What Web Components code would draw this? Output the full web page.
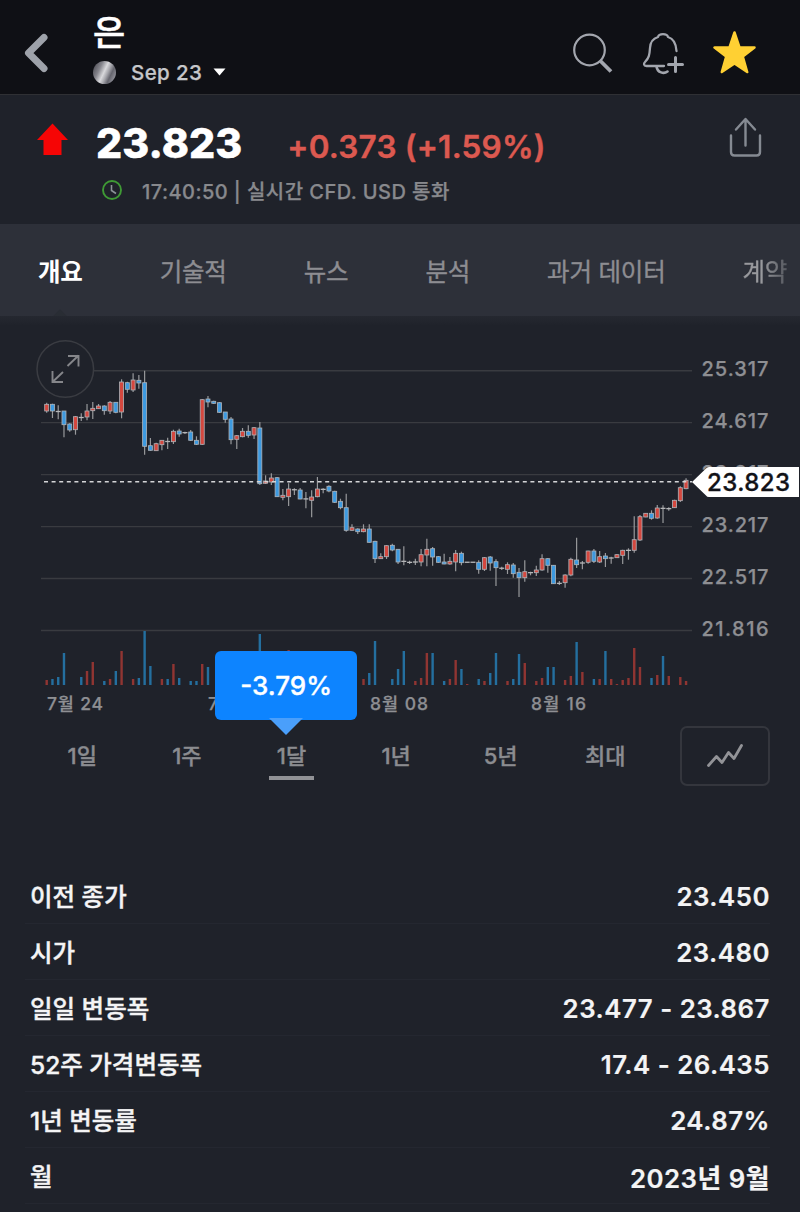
<!DOCTYPE html>
<html lang="ko">
<head>
<meta charset="utf-8">
<title>은 23.823</title>
<style>
    body {
        margin: 0;
        width: 800px;
        height: 1212px;
        overflow: hidden;
        background: #1f222a;
        color: #f4f4f5;
        font-family: Inter, "Noto Sans CJK KR", sans-serif;
    }
</style>
</head>
<body>
<top-bar>
    <span slot="title">은</span>
    <span slot="contract">Sep 23</span>
</top-bar>
<price-summary>
    <span slot="price">23.823</span>
    <span slot="change">+0.373 (+1.59%)</span>
    <span slot="status">17:40:50 | 실시간 CFD. USD 통화</span>
</price-summary>
<tab-strip>
    <tab-item active>개요</tab-item>
    <tab-item>기술적</tab-item>
    <tab-item>뉴스</tab-item>
    <tab-item>분석</tab-item>
    <tab-item>과거 데이터</tab-item>
    <tab-item>계약</tab-item>
</tab-strip>
<price-chart></price-chart>
<range-picker>
    <range-item>1일</range-item>
    <range-item>1주</range-item>
    <range-item active change="-3.79%">1달</range-item>
    <range-item>1년</range-item>
    <range-item>5년</range-item>
    <range-item>최대</range-item>
</range-picker>
<stat-list>
    <stat-row label="이전 종가">23.450</stat-row>
    <stat-row label="시가">23.480</stat-row>
    <stat-row label="일일 변동폭">23.477 - 23.867</stat-row>
    <stat-row label="52주 가격변동폭">17.4 - 26.435</stat-row>
    <stat-row label="1년 변동률">24.87%</stat-row>
    <stat-row label="월">2023년 9월</stat-row>
</stat-list>

<script>
class BaseElement extends HTMLElement {
    connectedCallback() {
        const template = document.createElement('template');
        template.innerHTML = this.render();
        this.attachShadow({ mode: 'open' }).append(template.content.cloneNode(true));
    }
}

class TopBar extends BaseElement {
    render() {
        return `
            <style>
                :host {
                    display: flex;
                    align-items: center;
                    box-sizing: border-box;
                    height: 95px;
                    padding: 0 42px 0 22px;
                    background: #0f1015;
                    border-bottom: 1px solid #2f3034;
                }
                .back { width: 28px; height: 40px; margin-top: 12px; }
                .name { flex: 1; margin-left: 43px; }
                .title {
                    height: 40px;
                    margin-top: 4px;
                    font-size: 35px;
                    line-height: 38px;
                    font-weight: 500;
                    color: #fff;
                    -webkit-text-stroke: 0.5px;
                }
                .contract {
                    display: flex;
                    align-items: center;
                    height: 24px;
                    margin-top: 6px;
                    font-size: 20.5px;
                    font-weight: 500;
                    letter-spacing: 0.4px;
                    color: #c6c7ca;
                    -webkit-text-stroke: 0.25px;
                }
                .coin {
                    width: 23px;
                    height: 23px;
                    border-radius: 50%;
                    margin-right: 15px;
                    background: linear-gradient(115deg, #55555d 10%, #85858c 30%, #d9d9dc 48%, #a5a5ab 60%, #65656e 72%, #a2a2aa 95%);
                }
                .caret { margin-left: 11px; }
                .actions { display: flex; gap: 28px; margin-top: 11px; }
            </style>
            <svg class="back" viewBox="0 0 28 40" fill="none" stroke="#9ea2aa" stroke-width="7" stroke-linecap="round" stroke-linejoin="round">
                <path d="M22 4.5 6.500 20 22 35.500"/>
            </svg>
            <div class="name">
                <div class="title"><slot name="title"></slot></div>
                <div class="contract">
                    <span class="coin"></span>
                    <slot name="contract"></slot>
                    <svg class="caret" width="13" height="8" viewBox="0 0 13 8"><path d="M.5.500h12L6.500 7.500z" fill="#fff"/></svg>
                </div>
            </div>
            <div class="actions">
                <svg width="42" height="44" viewBox="0 0 42 44" fill="none" stroke="#a3a6ae">
                    <circle cx="17.500" cy="19" r="15.300" stroke-width="2.200"/>
                    <path d="M28 29.500 39 40.500" stroke-width="3.800"/>
                </svg>
                <svg width="42" height="44" viewBox="0 0 42 44" fill="none" stroke="#a3a6ae" stroke-width="2.300" stroke-linecap="round" stroke-linejoin="round">
                    <path d="M22 35H4.500C1.500 35 1.500 32.500 3 31C7 27 7.500 24 8 17C8.300 11 11 7.500 16 6C17 2.200 25 2.200 26 6C31 7.500 34 11 34.500 20"/>
                    <path d="M14.500 35.500C15.500 42 22 43 25.500 40.500" stroke-width="2.600"/>
                    <path d="M33.500 26.500V40.500M26.500 33.500H40.500" stroke-width="3"/>
                </svg>
                <svg width="46" height="44" viewBox="0 0 46 44" fill="#ffd033" stroke="#ffd033" stroke-width="2.500" stroke-linejoin="round">
                    <path d="M22.500 1.500 27.500 16.500H42.500L30.800 25.500 35.200 41 22.500 32.500 9.800 41 14.200 25.500 2.500 16.500H17.500z"/>
                </svg>
            </div>
        `;
    }
}

class PriceSummary extends BaseElement {
    render() {
        return `
            <style>
                :host {
                    display: flex;
                    box-sizing: border-box;
                    height: 129px;
                    padding: 22px 38px 0 37px;
                }
                .arrow { margin-top: 6px; }
                .text { flex: 1; margin-left: 28px; }
                .numbers { display: flex; align-items: baseline; height: 56px; }
                .price { font-size: 41px; line-height: 52px; font-weight: 800; color: #fff; letter-spacing: 0.1px; -webkit-text-stroke: 0.5px; }
                .change { margin-left: 45px; font-size: 31.5px; font-weight: 600; letter-spacing: 0.2px; color: #dc5950; -webkit-text-stroke: 0.4px; }
                .status {
                    display: flex;
                    align-items: center;
                    height: 30px;
                    margin: 2px 0 0 6px;
                    font-size: 20px;
                    font-weight: 500;
                    letter-spacing: 0.45px;
                    color: #88898d;
                    -webkit-text-stroke: 0.25px;
                }
                .clock { margin-right: 20px; }
            </style>
            <svg class="arrow" width="31" height="33" viewBox="0 0 31 33"><path d="M15.500.500 31 17H24.500V32H6.500V17H0z" fill="#f60505"/></svg>
            <div class="text">
                <div class="numbers">
                    <span class="price"><slot name="price"></slot></span>
                    <span class="change"><slot name="change"></slot></span>
                </div>
                <div class="status">
                    <svg class="clock" width="20" height="20" viewBox="0 0 20 20" fill="none">
                        <circle cx="10" cy="10" r="9" stroke="#3f9a35" stroke-width="1.900"/>
                        <path d="M9.500 5V10.500L14 13.500" stroke="#8c9398" stroke-width="1.600"/>
                    </svg>
                    <slot name="status"></slot>
                </div>
            </div>
            <svg width="34" height="42" viewBox="0 0 34 42" fill="none" stroke="#858a92" stroke-width="2.400" stroke-linecap="round" stroke-linejoin="round">
                <path d="M3 18.500V35Q3 38.500 6.500 38.500H28.500Q32 38.500 32 35V18.500M17.500 28.500V2.500M8 12.500 17.500 2 27 12.500"/>
            </svg>
        `;
    }
}

class TabStrip extends BaseElement {
    render() {
        return `
            <style>
                :host {
                    display: flex;
                    gap: 77px;
                    box-sizing: border-box;
                    height: 92px;
                    padding-left: 38px;
                    overflow: hidden;
                    background: #2d3039;
                }
            </style>
            <slot></slot>
        `;
    }
}

class TabItem extends BaseElement {
    render() {
        return `
            <style>
                :host {
                    position: relative;
                    display: flex;
                    flex: none;
                    align-items: center;
                    padding-top: 1px;
                    font-size: 24.500px;
                    letter-spacing: -0.2px;
                    color: #8d8d92;
                    white-space: nowrap;
                    -webkit-text-stroke: 0.35px;
                }
                :host([active]) { color: #fff; font-weight: 700; -webkit-text-stroke: 0; }
                :host(:last-child) {
                    background: linear-gradient(90deg, #98999d 45%, #55585f);
                    -webkit-background-clip: text;
                    color: transparent;
                    -webkit-text-stroke: 0.35px transparent;
                }
                /* notch pointing at the open page */
                :host([active])::after {
                    content: "";
                    position: absolute;
                    left: 50%;
                    bottom: -9px;
                    width: 13px;
                    height: 13px;
                    transform: translateX(-50%) rotate(45deg);
                    background: #292d34;
                }
            </style>
            <slot></slot>
        `;
    }
}

// [high, open/close top, open/close bottom, low, kind]: u = up, d = down, n = flat
const CANDLES = [
    [402.7, 404.3, 411, 412.7, 'u'], [403.7, 404.3, 411, 418, 'd'], [405.3, 411, 412, 419.3, 'n'], [411, 411, 424.7, 437.3, 'd'],
    [423.3, 424, 430, 431.7, 'd'], [416, 416.7, 429.7, 434.7, 'u'], [413.3, 417, 418, 421, 'n'], [404, 411, 417, 420.3, 'u'],
    [402, 408.3, 410.7, 419, 'u'], [404, 406, 408.7, 409, 'u'], [405.3, 406, 410.7, 414.7, 'd'], [401, 402.3, 411, 414, 'u'],
    [402.3, 402.3, 412.3, 413.3, 'd'], [379.3, 382, 412, 418.3, 'u'], [381.7, 382.7, 389.3, 392.7, 'd'], [373.3, 380, 390, 392, 'u'],
    [375, 380.3, 383, 388.7, 'd'], [370.7, 382.7, 446.3, 454.7, 'd'], [438, 445.7, 450.3, 450.7, 'd'], [442.7, 443.7, 450.7, 451, 'u'],
    [440, 440.3, 444.7, 450.3, 'u'], [437.7, 441, 442, 449, 'n'], [429.7, 431.3, 441.7, 444, 'u'], [428.7, 431, 434, 436.7, 'd'],
    [431.7, 432.3, 433, 434, 'n'], [430, 432, 440.3, 441, 'd'], [436.3, 440.3, 444.3, 445, 'd'], [399, 399.7, 444.3, 445, 'u'],
    [396, 399, 402, 407.3, 'd'], [400.7, 401.3, 403.3, 404, 'd'], [402, 402.7, 412.3, 413, 'd'], [412, 412, 419.3, 422.7, 'd'],
    [417, 419, 439.7, 444.3, 'd'], [435, 435.7, 439.3, 449, 'u'], [428, 431.3, 436.7, 437.3, 'u'], [425.3, 431.3, 435.3, 437.7, 'd'],
    [427, 427.7, 435, 439, 'u'], [422, 428, 483.7, 485, 'd'], [475.3, 481, 483.3, 484, 'u'], [473.3, 478, 482, 485, 'u'],
    [477, 477.7, 496.7, 497, 'd'], [489, 495.3, 497.3, 500.3, 'u'], [483.3, 489, 496.7, 506, 'u'], [488.3, 489, 490.5, 495, 'n'],
    [488, 490, 499, 499.3, 'd'], [492, 498.5, 499.3, 508.3, 'n'], [490.3, 497, 500.3, 517.3, 'u'], [477, 489, 496.7, 497.3, 'u'],
    [488.3, 489, 489.7, 493.3, 'n'], [485.3, 486.3, 491, 492.3, 'd'], [490.7, 491.3, 502.3, 503, 'd'], [498.7, 501.3, 507.7, 509.3, 'd'],
    [493.7, 507.7, 530.3, 531.7, 'd'], [524.3, 527.7, 530.3, 530.7, 'u'], [528.3, 529, 531.7, 534, 'd'], [524.3, 529, 531.7, 532.3, 'u'],
    [524.3, 529, 542.3, 542.7, 'd'], [540.7, 541.3, 558.7, 563, 'd'], [553.3, 556.7, 558.7, 559, 'u'], [545.3, 545.7, 556.7, 559, 'u'],
    [543.7, 545.3, 550, 551.3, 'd'], [549, 549.3, 562, 564, 'd'], [546.3, 561, 561.7, 565.3, 'n'], [560.7, 562, 562.7, 564, 'n'],
    [558.7, 561.7, 562.3, 565, 'n'], [549, 554.7, 562, 566.3, 'u'], [538.7, 549.3, 555, 566.3, 'u'], [547, 548.7, 557, 565.7, 'd'],
    [556, 556.7, 562.3, 563, 'd'], [553.7, 562, 564, 564.3, 'd'], [557, 561.3, 564, 564.7, 'u'], [550, 553.3, 562, 571.3, 'u'],
    [551.7, 553.3, 562.7, 565.3, 'd'], [562, 562, 562.5, 562.5, 'n'], [562, 562, 562.5, 562.5, 'n'], [560.3, 562.3, 569.3, 573.7, 'd'],
    [557, 557.7, 569.3, 571, 'u'], [556, 557, 563, 570.7, 'd'], [559.3, 561.7, 567.7, 586, 'd'], [566.7, 568, 568.5, 570, 'n'],
    [562.3, 564.7, 569.3, 574, 'u'], [563, 565, 573.7, 577.7, 'd'], [568, 572.3, 577.7, 597, 'd'], [560.3, 571.7, 577.7, 581.7, 'u'],
    [571.7, 572.3, 573, 575.3, 'n'], [565.7, 570, 572.7, 576, 'u'], [554.3, 558.7, 570, 570.7, 'u'], [558, 558.7, 565.3, 572.7, 'd'],
    [565, 565.3, 583.7, 584, 'd'], [581, 583, 583.7, 585, 'n'], [574.3, 575, 582.7, 587.7, 'u'], [557.7, 559.3, 575, 576.3, 'u'],
    [537.7, 560, 564.7, 568, 'd'], [561, 562.7, 563.3, 569.3, 'n'], [550.7, 551, 562.3, 563.7, 'u'], [549, 551, 561.3, 563, 'd'],
    [551, 556.7, 562, 563, 'u'], [553, 556, 558.7, 567, 'd'], [556.7, 557.7, 558.3, 563.7, 'n'], [554, 554.7, 557.7, 558, 'u'],
    [549.7, 550.3, 555.3, 564, 'u'], [548.3, 550, 550.7, 559.7, 'n'], [516.3, 539.7, 550.3, 552.7, 'u'], [515, 516.7, 540, 541, 'u'],
    [513, 513.3, 517, 517.3, 'u'], [510.3, 513.3, 518.3, 519.7, 'd'], [505, 508, 518, 518.7, 'u'], [505.3, 508, 508.7, 523, 'n'],
    [507.3, 508.3, 509, 510.7, 'n'], [499.7, 500.3, 507.7, 508, 'u'], [486.3, 487.7, 500.7, 502, 'u'], [478.3, 480.3, 488.7, 489.3, 'u']
];

// candle index: bar height, negative for a falling bar
const VOLUMES = {
    0: 5, 1: -6, 2: -8, 3: -32, 6: -8, 7: 14, 8: 23, 10: -4, 11: 6, 12: -14, 13: 34, 15: 6, 16: -7, 17: -54, 18: -19,
    20: 6, 21: -6, 22: 21, 23: -7, 25: -4, 26: -4, 27: 21, 28: -18, 37: -51, 42: 35, 55: 6, 56: -12, 57: -44,
    60: -6, 61: -16, 62: -34, 64: 4, 65: 7, 66: 32, 67: -32, 69: -4, 70: 6, 71: 25, 72: -16, 73: 1, 75: -6, 76: 4, 77: -12, 78: -32,
    80: 4, 81: -6, 82: -31, 83: 22, 85: 4, 86: 7, 87: -18, 88: -18, 90: 5, 91: 9, 92: -43, 93: 13, 95: -6, 96: 6, 97: -34, 98: 6,
    99: 1, 100: 5, 101: 7, 102: 37, 103: 18, 105: -7, 106: 10, 107: -29, 108: 9, 110: 8, 111: 4
};

class PriceChart extends BaseElement {
    #x(i) {
        return 46.7 + i * 5.76;
    }

    #grid() {
        const labels = ['25.317', '24.617', '23.917', '23.217', '22.517', '21.816'];
        return labels.map((label, i) => {
            const y = 370.7 + i * 51.96;
            return `
                <path d="M41 ${y}H692" stroke="#393b40" stroke-width="1.400"/>
                <text x="701.500" y="${y + 5.300}" font-size="20" textLength="67" class="label">${label}</text>
            `;
        }).join('');
    }

    #candle([high, top, bottom, low, kind], i) {
        const x = this.#x(i);
        const wick = `<path d="M${x} ${high}V${low}" stroke="#98999c" stroke-width="1.200"/>`;
        if (kind === 'n') {
            return `${wick}<path d="M${x - 2.500} ${(top + bottom) / 2}h5" stroke="#b5b6b8" stroke-width="1.300"/>`;
        }
        const fill = kind === 'u' ? '#d4483f' : '#3d9ae0';
        return `${wick}<rect x="${x - 2}" y="${top}" width="4" height="${bottom - top}" fill="${fill}" stroke="#aeb4ba" stroke-width=".8"/>`;
    }

    #volume([i, size]) {
        const height = Math.abs(size);
        return `<rect x="${this.#x(+i) - 1.200}" y="${685 - height}" width="2.400" height="${height}" fill="${size > 0 ? '#903532' : '#246f9f'}"/>`;
    }

    render() {
        return `
            <style>
                :host {
                    display: block;
                    height: 404px;
                    background: linear-gradient(#252830, #1f222a 10px);
                }
                svg { display: block; font-weight: 500; }
                .label { fill: #8e8f93; stroke: #8e8f93; stroke-width: 0.25px; }
            </style>
            <svg width="800" height="404" viewBox="0 316 800 404">
                ${this.#grid()}
                ${CANDLES.map((candle, i) => this.#candle(candle, i)).join('')}
                ${Object.entries(VOLUMES).map(entry => this.#volume(entry)).join('')}
                <path d="M44 481.700H692" stroke="#d4d5d7" stroke-width="1.400" stroke-dasharray="4 3.600"/>
                <circle cx="65.300" cy="369" r="28.300" fill="#1f222a" stroke="#3a3c42" stroke-width="1.500"/>
                <path d="M67.500 366 78.500 355.500M68 356H78.500V366.500M63 372 52.500 382M52.500 371V382H63" fill="none" stroke="#85868a" stroke-width="1.900"/>
                <path d="M692 482 706 468.500Q707 467 709 467H799V497H709Q707 497 706 495.500z" fill="#fff"/>
                <text x="707" y="490.500" font-size="24" textLength="83" fill="#111217" stroke="#111217" stroke-width=".3">23.823</text>
                <g font-size="17.500" class="label">
                    <text x="47" y="710" textLength="56">7월 24</text>
                    <text x="208" y="710">7월 31</text>
                    <text x="370" y="710" textLength="58">8월 08</text>
                    <text x="531" y="710" textLength="55">8월 16</text>
                </g>
            </svg>
        `;
    }
}

class RangePicker extends BaseElement {
    render() {
        return `
            <style>
                :host {
                    display: flex;
                    box-sizing: border-box;
                    height: 148px;
                    padding: 6px 30px 0;
                }
                .items { display: grid; grid-template-columns: repeat(6, 104.600px); width: 651px; }
                button {
                    width: 90px;
                    height: 60px;
                    padding: 0;
                    border: 2px solid #34363d;
                    border-radius: 7px;
                    background: none;
                }
            </style>
            <div class="items"><slot></slot></div>
            <button>
                <svg width="38" height="26" viewBox="0 0 38 26" fill="none" stroke="#929397" stroke-width="2.800" stroke-linecap="round" stroke-linejoin="round">
                    <path d="M2.500 23.500 10.500 14.500 16 20.500 22.500 10.500 28 16.500 35.500 3.500"/>
                </svg>
            </button>
        `;
    }
}

class RangeItem extends BaseElement {
    render() {
        const change = this.getAttribute('change');
        return `
            <style>
                :host {
                    position: relative;
                    display: block;
                    height: 60px;
                    text-align: center;
                    font-size: 22px;
                    line-height: 61px;
                    font-weight: 500;
                    color: #8b8c90;
                    -webkit-text-stroke: 0.35px;
                }
                :host([active])::after {
                    content: "";
                    position: absolute;
                    left: 30px;
                    top: 50px;
                    width: 45px;
                    height: 4px;
                    background: #919296;
                }
                .bubble {
                    position: absolute;
                    left: -24px;
                    bottom: 66px;
                    width: 142px;
                    height: 69px;
                    border-radius: 6px;
                    background: #0d84ff;
                    color: #fff;
                    font-size: 26px;
                    line-height: 69px;
                    font-weight: 500;
                }
                .bubble::after {
                    content: "";
                    position: absolute;
                    left: 54px;
                    top: 67px;
                    border: 17px solid transparent;
                    border-top-color: #4a9ffb;
                    border-bottom: 0;
                }
            </style>
            <slot></slot>
            ${change ? `<div class="bubble">${change}</div>` : ''}
        `;
    }
}

class StatList extends BaseElement {
    render() {
        return `
            <style>
                :host { display: block; padding: 0 30px 0 25px; }
            </style>
            <slot></slot>
        `;
    }
}

class StatRow extends BaseElement {
    render() {
        return `
            <style>
                :host {
                    display: flex;
                    align-items: center;
                    justify-content: space-between;
                    box-sizing: border-box;
                    height: 56px;
                    padding: 1px 0 0 5px;
                    border-bottom: 1px solid #242730;
                    font-size: 25.800px;
                    font-weight: 600;
                    letter-spacing: 0.5px;
                    -webkit-text-stroke: 0.2px;
                }
                .label {
                    padding-bottom: 1px;
                    font-size: 24.500px;
                    font-weight: 500;
                    letter-spacing: 0;
                    -webkit-text-stroke: 0.4px;
                }
            </style>
            <span class="label">${this.getAttribute('label')}</span>
            <span><slot></slot></span>
        `;
    }
}

customElements.define('top-bar', TopBar);
customElements.define('price-summary', PriceSummary);
customElements.define('tab-strip', TabStrip);
customElements.define('tab-item', TabItem);
customElements.define('price-chart', PriceChart);
customElements.define('range-picker', RangePicker);
customElements.define('range-item', RangeItem);
customElements.define('stat-list', StatList);
customElements.define('stat-row', StatRow);
</script>
</body>
</html>
